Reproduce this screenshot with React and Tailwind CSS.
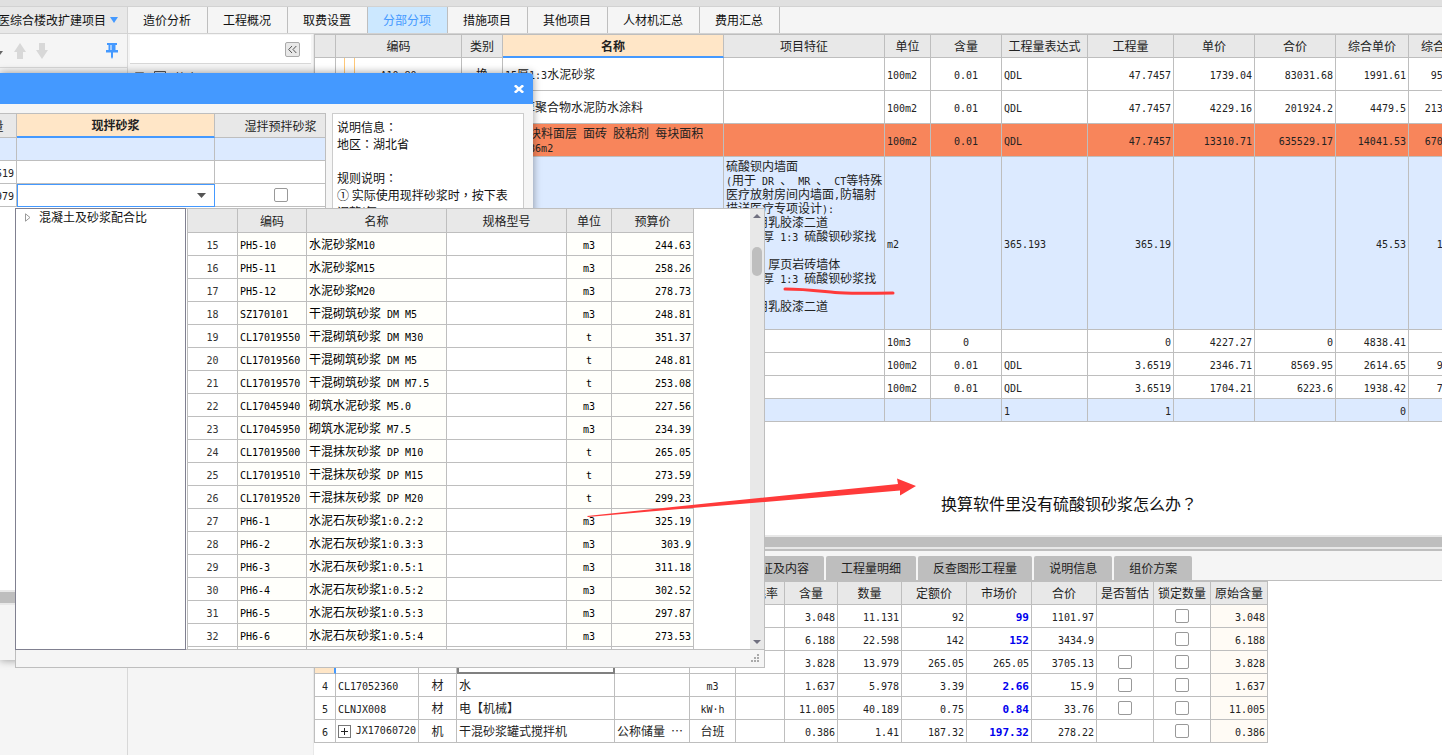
import React, { useState } from 'react'
import clsx from 'clsx'

const navTabs = ['造价分析', '工程概况', '取费设置', '分部分项', '措施项目', '其他项目', '人材机汇总', '费用汇总']

const detailTabs = ['安装费用', '换算信息', '标准换算', '单价构成', '工料机显示', '特征及内容', '工程量明细', '反查图形工程量', '说明信息', '组价方案']

const itemColumns = [
  { key: 'no', label: '', width: 'w-[21px]', align: 'text-center' },
  { key: 'code', label: '编码', width: 'w-[126px]', align: 'text-center' },
  { key: 'type', label: '类别', width: 'w-[41px]', align: 'text-center' },
  { key: 'name', label: '名称', width: 'w-[221px]', align: 'text-left', active: true },
  { key: 'feature', label: '项目特征', width: 'w-[161px]', align: 'text-left' },
  { key: 'unit', label: '单位', width: 'w-[46px]', align: 'text-left' },
  { key: 'content', label: '含量', width: 'w-[71px]', align: 'text-center' },
  { key: 'expr', label: '工程量表达式', width: 'w-[86px]', align: 'text-left' },
  { key: 'qty', label: '工程量', width: 'w-[86px]', align: 'text-right' },
  { key: 'price', label: '单价', width: 'w-[81px]', align: 'text-right' },
  { key: 'total', label: '合价', width: 'w-[81px]', align: 'text-right' },
  { key: 'fullPrice', label: '综合单价', width: 'w-[73px]', align: 'text-right' },
  { key: 'fullTotal', label: '综合合价', width: 'w-[73px]', align: 'text-right' },
]

const feature = [
  '硫酸钡内墙面',
  '(用于 DR 、 MR 、 CT等特殊',
  '医疗放射房间内墙面,防辐射',
  '描详医疗专项设计):',
  '1、医用乳胶漆二道',
  '2、20 厚 1:3 硫酸钡砂浆找',
  '平',
  '3、200 厚页岩砖墙体',
  '4、20 厚 1:3 硫酸钡砂浆找',
  '平',
  '5、医用乳胶漆二道',
  ' ',
].join('\n')

const items = [
  { height: 'h-[33px]', nested: true, code: 'A10-80', type: '换', name: '15厚1:3水泥砂浆', unit: '100m2', content: '0.01', expr: 'QDL', qty: '47.7457', price: '1739.04', total: '83031.68', fullPrice: '1991.61', fullTotal: '95090.81' },
  { height: 'h-[33px]', nested: true, name: '1.5厚聚合物水泥防水涂料', unit: '100m2', content: '0.01', expr: 'QDL', qty: '47.7457', price: '4229.16', total: '201924.2', fullPrice: '4479.5', fullTotal: '213876.86' },
  { height: 'h-[33px]', bg: 'bg-[#f8855b]', name: '墙面块料面层 面砖 胶粘剂 每块面积\n<=0.36m2', unit: '100m2', content: '0.01', expr: 'QDL', qty: '47.7457', price: '13310.71', total: '635529.17', fullPrice: '14041.53', fullTotal: '670422.68' },
  { height: 'h-[173px]', bg: 'bg-[#dceaff]', feature, unit: 'm2', expr: '365.193', qty: '365.19', fullPrice: '45.53', fullTotal: '16627.1' },
  { height: 'h-[23px]', unit: '10m3', content: '0', qty: '0', price: '4227.27', total: '0', fullPrice: '4838.41', fullTotal: '0' },
  { height: 'h-[23px]', unit: '100m2', content: '0.01', expr: 'QDL', qty: '3.6519', price: '2346.71', total: '8569.95', fullPrice: '2614.65', fullTotal: '9548.44' },
  { height: 'h-[23px]', unit: '100m2', content: '0.01', expr: 'QDL', qty: '3.6519', price: '1704.21', total: '6223.6', fullPrice: '1938.42', fullTotal: '7078.92' },
  { height: 'h-[23px]', bg: 'bg-[#dceaff]', expr: '1', qty: '1', fullPrice: '0', fullTotal: '0' },
]

const resourceColumns = [
  { key: 'no', label: '', width: 'w-[21px]', align: 'text-center' },
  { key: 'code', label: '编码', width: 'w-[83px]', align: 'text-left' },
  { key: 'type', label: '类别', width: 'w-[38px]', align: 'text-center' },
  { key: 'name', label: '名称', width: 'w-[158px]', align: 'text-left' },
  { key: 'spec', label: '规格及型号', width: 'w-[75px]', align: 'text-left' },
  { key: 'unit', label: '单位', width: 'w-[46px]', align: 'text-center' },
  { key: 'loss', label: '损耗率', width: 'w-[49px]', align: 'text-right' },
  { key: 'content', label: '含量', width: 'w-[53px]', align: 'text-right' },
  { key: 'qty', label: '数量', width: 'w-[64px]', align: 'text-right' },
  { key: 'quota', label: '定额价', width: 'w-[65px]', align: 'text-right' },
  { key: 'market', label: '市场价', width: 'w-[65px]', align: 'text-right' },
  { key: 'total', label: '合价', width: 'w-[65px]', align: 'text-right' },
  { key: 'estimated', label: '是否暂估', width: 'w-[57px]', align: 'text-center' },
  { key: 'locked', label: '锁定数量', width: 'w-[57px]', align: 'text-center' },
  { key: 'origin', label: '原始含量', width: 'w-[57px]', align: 'text-right' },
]

const resources = [
  { no: '1', type: '人', name: '普工', unit: '工日', content: '3.048', qty: '11.131', quota: '92', market: '99', changed: true, total: '1101.97' },
  { no: '2', type: '人', name: '技工', unit: '工日', content: '6.188', qty: '22.598', quota: '142', market: '152', changed: true, total: '3434.9' },
  { no: '3', code: 'CL17019500', type: '商浆', name: '干混抹灰砂浆 DP M10', unit: 't', content: '3.828', qty: '13.979', quota: '265.05', market: '265.05', total: '3705.13', canEstimate: true, selected: true },
  { no: '4', code: 'CL17052360', type: '材', name: '水', unit: 'm3', content: '1.637', qty: '5.978', quota: '3.39', market: '2.66', changed: true, total: '15.9', canEstimate: true },
  { no: '5', code: 'CLNJX008', type: '材', name: '电【机械】', unit: 'kW·h', content: '11.005', qty: '40.189', quota: '0.75', market: '0.84', changed: true, total: '33.76', canEstimate: true },
  { no: '6', code: 'JX17060720', expandable: true, type: '机', name: '干混砂浆罐式搅拌机', spec: '公称储量 …', unit: '台班', content: '0.386', qty: '1.41', quota: '187.32', market: '197.32', changed: true, total: '278.22' },
]

const mortars = [
  [15, 'PH5-10', '水泥砂浆M10', 'm3', '244.63'],
  [16, 'PH5-11', '水泥砂浆M15', 'm3', '258.26'],
  [17, 'PH5-12', '水泥砂浆M20', 'm3', '278.73'],
  [18, 'SZ170101', '干混砌筑砂浆 DM M5', 'm3', '248.81'],
  [19, 'CL17019550', '干混砌筑砂浆 DM M30', 't', '351.37'],
  [20, 'CL17019560', '干混砌筑砂浆 DM M5', 't', '248.81'],
  [21, 'CL17019570', '干混砌筑砂浆 DM M7.5', 't', '253.08'],
  [22, 'CL17045940', '砌筑水泥砂浆 M5.0', 'm3', '227.56'],
  [23, 'CL17045950', '砌筑水泥砂浆 M7.5', 'm3', '234.39'],
  [24, 'CL17019500', '干混抹灰砂浆 DP M10', 't', '265.05'],
  [25, 'CL17019510', '干混抹灰砂浆 DP M15', 't', '273.59'],
  [26, 'CL17019520', '干混抹灰砂浆 DP M20', 't', '299.23'],
  [27, 'PH6-1', '水泥石灰砂浆1:0.2:2', 'm3', '325.19'],
  [28, 'PH6-2', '水泥石灰砂浆1:0.3:3', 'm3', '303.9'],
  [29, 'PH6-3', '水泥石灰砂浆1:0.5:1', 'm3', '311.18'],
  [30, 'PH6-4', '水泥石灰砂浆1:0.5:2', 'm3', '302.52'],
  [31, 'PH6-5', '水泥石灰砂浆1:0.5:3', 'm3', '297.87'],
  [32, 'PH6-6', '水泥石灰砂浆1:0.5:4', 'm3', '273.53'],
]

const th = 'border-r border-b border-[#bebebe] bg-[#e8e8e8] p-0 text-center whitespace-nowrap'
const thActive = 'border-b-2 border-b-[#4499ff] bg-[#ffe6c7] font-bold'
const td = 'overflow-hidden border-r border-b border-[#bebebe] px-0.5 py-0 whitespace-pre'
const grid = 'w-0 table-fixed border-separate border-spacing-0 text-xs leading-[14px] text-[#222]'

// Latin runs are set in a monospace face exactly half a Chinese character wide
const Txt = ({ children, bold }) =>
  String(children ?? '')
    .split(/([\x20-\x7e·]+)/)
    .map((part, i) =>
      i % 2 ? (
        <span key={i} className={clsx("leading-none font-['DejaVu_Sans_Mono',monospace]", bold ? 'text-[11px]' : 'text-[10px]')}>
          {part}
        </span>
      ) : (
        part
      )
    )

// Full-width punctuation sits in the middle of its box
const Note = ({ children }) =>
  children.split(/([：，？])/).map((part, i) =>
    i % 2 ? (
      <span key={i} lang="zh-TW" className="leading-none font-['Noto_Sans_CJK_TC',sans-serif]">
        {part}
      </span>
    ) : (
      part
    )
  )

const Check = ({ label }) => (
  <input
    type="checkbox"
    aria-label={label}
    className="mx-auto block size-3.5 appearance-none rounded-[2px] border border-[#999] bg-white checked:bg-[#4499ff]"
  />
)

const TopBar = ({ active, onSelect }) => (
  <header className="shrink-0">
    <div className="h-1.5 bg-[#e0e0e0]" />
    <nav className="flex h-7 border-y border-[#d2d2d2] bg-[#f5f5f5] text-xs">
      <button type="button" className="flex w-32 shrink-0 items-center justify-end gap-1 overflow-hidden border-r border-[#d2d2d2] bg-[#e8e8e8] pr-[9px] whitespace-nowrap">
        医综合楼改扩建项目
        <svg width="8" height="6" viewBox="0 0 8 6" className="shrink-0">
          <path d="M0 0h8L4 6z" fill="#4499ff" />
        </svg>
      </button>
      {navTabs.map((tab) => (
        <button
          key={tab}
          type="button"
          onClick={() => onSelect(tab)}
          className={clsx(
            'shrink-0 border-r border-[#bebebe] pr-4 pl-[15px] whitespace-nowrap',
            tab === active && 'bg-[#cce8ff] text-[#4499ff]'
          )}
        >
          {tab}
        </button>
      ))}
    </nav>
  </header>
)

const ProjectPane = () => (
  <aside className="w-32 shrink-0 border-r border-[#d8d8d8] bg-[#f5f5f5]">
    <div className="flex h-[34px] items-center border-b border-[#d8d8d8] pr-[9px]">
      <svg width="3" height="4" viewBox="0 0 3 4" className="mt-1">
        <path d="M0 0h3L0 4z" fill="#666" />
      </svg>
      <svg width="12" height="16" viewBox="0 0 12 16" className="ml-[11px]">
        <path d="M6 0l6 9H9v7H3V9H0z" fill="#d8d8d8" />
      </svg>
      <svg width="12" height="16" viewBox="0 0 12 16" className="ml-2.5">
        <path d="M6 16l6-9H9V0H3v7H0z" fill="#d8d8d8" />
      </svg>
      <svg width="12" height="16" viewBox="0 0 12 16" className="ml-auto">
        <path d="M1 0h10v2H9.500v5H12v2.500H7V14l-1 2-1-2V9.500H0V7h2.500V2H1z" fill="#4499ff" />
        <path d="M4.500 2h1v5h-1z" fill="#fff" />
      </svg>
    </div>
  </aside>
)

const TreePane = () => (
  <aside className="w-[186px] shrink-0 border-r border-[#e8e8e8] bg-[#f5f5f5] px-0.5 pt-px">
    <div className="flex h-[29px] items-center justify-end border-b border-[#d8d8d8] bg-white pr-[11px]">
      <button type="button" aria-label="收起" className="flex size-[15px] items-center justify-center rounded-[2px] border border-[#aaa] bg-[#e8e8e8]">
        <svg width="9" height="7" viewBox="0 0 9 7" fill="none" stroke="#555">
          <path d="M4 0L.7 3.500 4 7M8.300 0L5 3.500 8.300 7" />
        </svg>
      </button>
    </div>
    <div className="flex h-7 items-center pl-[5px] text-xs text-[#222]">
      <svg width="9" height="12" viewBox="0 0 9 12" fill="none" stroke="#888">
        <path d="M.5 .5h8v10h-8zM2 6h5" />
      </svg>
      <svg width="12" height="14" viewBox="0 0 12 14" fill="#cfe3ff" stroke="#555" className="mr-2 ml-2.5">
        <path d="M.5 .5h11v13H.5zM3 4h6M3 7h6" />
      </svg>
      整个项目
    </div>
  </aside>
)

const ItemTable = () => (
  <table className={clsx(grid, 'border-t border-l border-[#bebebe]')}>
    <thead>
      <tr className="h-[23px]">
        {itemColumns.map((col) => (
          <th key={col.key} className={clsx(th, col.width, col.active ? thActive : 'font-normal')}>
            {col.label}
          </th>
        ))}
      </tr>
    </thead>
    <tbody>
      {items.map((row, i) => (
        <tr key={i} className={clsx(row.height, row.bg)}>
          {itemColumns.map((col) => (
            <td key={col.key} className={clsx(td, col.align, 'relative')}>
              {row.nested && col.key === 'code' && (
                // tree guides of the parent levels
                <span className="absolute inset-y-0 left-2 w-[11px] border-x border-[#ffc878]" />
              )}
              <Txt>{row[col.key]}</Txt>
            </td>
          ))}
        </tr>
      ))}
    </tbody>
  </table>
)

const ResourceCell = ({ row, col }) => {
  if (col.key === 'locked') return <Check label={`锁定数量 ${row.no}`} />
  if (col.key === 'estimated') return row.canEstimate ? <Check label={`是否暂估 ${row.no}`} /> : null
  if (col.key === 'origin') return <Txt>{row.content}</Txt>
  if (col.key === 'code' && row.expandable) {
    return (
      <span className="flex items-center gap-[5px]">
        <button type="button" aria-label="展开" className="flex size-[13px] items-center justify-center border border-[#777] bg-white">
          <svg width="7" height="7" viewBox="0 0 7 7" stroke="#222">
            <path d="M0 3.500h7M3.500 0v7" />
          </svg>
        </button>
        <Txt>{row.code}</Txt>
      </span>
    )
  }
  return <Txt bold={col.key === 'market' && row.changed}>{row[col.key]}</Txt>
}

const ResourceTable = () => (
  <table className={clsx(grid, 'border-t border-l border-[#bebebe]')}>
    <thead>
      <tr className="h-[23px]">
        {resourceColumns.map((col) => (
          <th key={col.key} className={clsx(th, col.width, 'font-normal')}>
            {col.label}
          </th>
        ))}
      </tr>
    </thead>
    <tbody>
      {resources.map((row) => (
        <tr key={row.no} className="h-[23px]">
          {resourceColumns.map((col) => (
            <td
              key={col.key}
              className={clsx(
                td,
                col.align,
                col.key === 'origin' && 'bg-[#fffbf5]',
                col.key === 'market' && row.changed && 'font-bold text-[#0000ee]',
                row.selected && col.key === 'no' && 'border-r-2 border-r-[#4499ff] bg-[#ffe6c7]',
                row.selected && col.key === 'name' && 'outline-2 -outline-offset-2 outline-[#808080]'
              )}
            >
              <ResourceCell row={row} col={col} />
            </td>
          ))}
        </tr>
      ))}
    </tbody>
  </table>
)

const DetailPane = () => (
  <section className="flex h-[220px] shrink-0 flex-col">
    <div className="h-4 shrink-0 border-y-2 border-t-[#e8e8e8] border-b-[#bebebe] bg-[#bebebe]">
      <div className="h-full border-b-2 border-[#e8e8e8]" />
    </div>
    <div className="flex shrink-0 gap-0.5 border-b border-[#bebebe] bg-[#f5f5f5] pt-[5px] pl-2 text-xs text-[#222]">
      {detailTabs.map((tab) => (
        <button key={tab} type="button" className="h-6 shrink-0 rounded-t-[2px] bg-[#bebebe] px-[15px] whitespace-nowrap">
          {tab}
        </button>
      ))}
    </div>
    <ResourceTable />
  </section>
)

const GlueDialog = () => (
  <section role="dialog" aria-label="标准换算" className="absolute top-[73px] left-0 flex h-[587px] w-[533px] flex-col overflow-hidden rounded-tr-[4px] bg-[#f5f5f5] shadow-[0_0_8px_rgba(0,0,0,0.4)]">
    <div className="flex h-[31px] shrink-0 items-center justify-end bg-[#4499ff] pr-[9px]">
      <button type="button" aria-label="关闭">
        <svg width="10" height="8" viewBox="0 0 10 8" stroke="#fff" strokeWidth="2.500">
          <path d="M.8 .3l8.400 7.400M9.200 .3L.8 7.700" />
        </svg>
      </button>
    </div>
    <div className="flex pt-[9px]">
      <div className="flex h-[492px] w-[326px] shrink-0 flex-col overflow-hidden border-t border-r border-[#bebebe] bg-white">
        <table className={clsx(grid, '-ml-[45px] shrink-0')}>
          <thead>
            <tr className="h-6">
              <th className={clsx(th, 'w-[62px] font-normal')}>工程量</th>
              <th className={clsx(th, thActive, 'w-[198px]')}>现拌砂浆</th>
              <th className={clsx(th, 'w-[132px] font-normal')}>湿拌预拌砂浆</th>
            </tr>
          </thead>
          <tbody>
            <tr className="h-[23px] bg-[#dceaff]">
              <td className={td} />
              <td className={td} />
              <td className={td} />
            </tr>
            <tr className="h-[23px]">
              <td className={clsx(td, 'text-right')}><Txt>3.6519</Txt></td>
              <td className={td} />
              <td className={td} />
            </tr>
            <tr className="h-[23px]">
              <td className={clsx(td, 'text-right')}><Txt>13.979</Txt></td>
              <td className="relative border border-[#4499ff] p-0">
                <select aria-label="现拌砂浆" className="block h-5 w-full appearance-none bg-transparent">
                  <option />
                </select>
                <svg width="9" height="5" viewBox="0 0 9 5" className="pointer-events-none absolute top-2 right-2">
                  <path d="M0 0h9L4.500 5z" fill="#555" />
                </svg>
              </td>
              <td className={td}><Check label="湿拌预拌砂浆" /></td>
            </tr>
          </tbody>
        </table>
        <div className="mt-auto h-[15px] border-y-2 border-[#e8e8e8] bg-[#bebebe]" />
      </div>
      <div className="ml-1.5 h-[492px] w-48 border border-[#ccc] bg-white px-1 py-1 text-xs leading-[17px] whitespace-pre">
        <Note>{'说明信息：\n地区：湖北省\n\n规则说明：\n① 实际使用现拌砂浆时，按下表\n调整(每：'}</Note>
      </div>
    </div>
  </section>
)

const MortarPicker = () => (
  <section className="absolute top-[208px] left-[15px] flex h-[460px] w-[750px] flex-col border border-[#bebebe] bg-[#f5f5f5]">
    <div className="flex h-[441px] border-b border-[#bebebe] bg-white">
      <div className="-m-px mr-0 flex w-[171px] shrink-0 items-start border border-[#808090] pl-[9px] text-xs">
        <button type="button" className="flex items-center gap-2">
          <svg width="6" height="9" viewBox="0 0 6 9" fill="none" stroke="#999">
            <path d="M.5 .8v7.400L5 4.500z" />
          </svg>
          混凝土及砂浆配合比
        </button>
      </div>
      <div className="ml-px flex min-w-0 flex-1 overflow-hidden">
        <table className={clsx(grid, 'h-max border-l border-[#bebebe] text-black')}>
          <thead>
            <tr className="h-6 text-[#222]">
              <th className={clsx(th, 'w-[50px] font-normal')} />
              <th className={clsx(th, 'w-[69px] font-normal')}>编码</th>
              <th className={clsx(th, 'w-[140px] font-normal')}>名称</th>
              <th className={clsx(th, 'w-[120px] font-normal')}>规格型号</th>
              <th className={clsx(th, 'w-[45px] font-normal')}>单位</th>
              <th className={clsx(th, 'w-[82px] font-normal')}>预算价</th>
            </tr>
          </thead>
          <tbody>
            {mortars.map(([no, code, name, unit, price]) => (
              <tr key={no} className="h-[23px]">
                <td className={clsx(td, 'text-center text-[#333]')}><Txt>{no}</Txt></td>
                <td className={clsx(td, 'bg-[#fffffb]')}><Txt>{code}</Txt></td>
                <td className={clsx(td, 'bg-[#fffffb]')}><Txt>{name}</Txt></td>
                <td className={td} />
                <td className={clsx(td, 'bg-[#fffffb] text-center')}><Txt>{unit}</Txt></td>
                <td className={clsx(td, 'bg-[#fffffb] text-right')}><Txt>{price}</Txt></td>
              </tr>
            ))}
            <tr className="h-[23px]">
              {[0, 1, 2, 3, 4, 5].map((i) => (
                <td key={i} className={td} />
              ))}
            </tr>
          </tbody>
        </table>
        <div className="ml-auto flex w-3.5 flex-col items-center bg-[#e8e8e8] py-[5px]">
          <svg width="8" height="4" viewBox="0 0 8 4">
            <path d="M4 0l4 4H0z" fill="#707080" />
          </svg>
          <div className="mt-[29px] h-[29px] w-2.5 rounded-full bg-[#bebebe]" />
          <svg width="8" height="4" viewBox="0 0 8 4" className="mt-auto">
            <path d="M0 0h8L4 4z" fill="#707080" />
          </svg>
        </div>
      </div>
    </div>
    <svg width="9" height="9" viewBox="0 0 9 9" fill="#aaa" className="mt-1 mr-1 ml-auto">
      <path d="M6 0h2v2H6zM3 3h2v2H3zM6 3h2v2H6zM0 6h2v2H0zM3 6h2v2H3zM6 6h2v2H6z" />
    </svg>
  </section>
)

const Annotations = () => (
  <div className="pointer-events-none absolute top-0 left-0">
    <svg width="940" height="530" viewBox="0 0 940 530" className="block">
      <path d="M785 289c20 0 34 2 50 3.500c14 1.500 40 .5 58 .5" fill="none" stroke="#ff3a3a" strokeWidth="3" strokeLinecap="round" />
      <path d="M587 516L720 502L898 484L897 478.500L916 486L900 495.500L900 490.500L740 504L650 511.500L588 517z" fill="#ff3a3a" />
    </svg>
    <p className="absolute top-[491px] left-[941px] text-base whitespace-nowrap text-[#111]">
      <Note>换算软件里没有硫酸钡砂浆怎么办？</Note>
    </p>
  </div>
)

const App = () => {
  const [active, setActive] = useState('分部分项')

  return (
    <div className="relative flex h-screen flex-col overflow-hidden bg-white font-['Noto_Sans_CJK_SC',sans-serif] text-[#111]">
      <TopBar active={active} onSelect={setActive} />
      <div className="flex min-h-0 flex-1">
        <ProjectPane />
        <TreePane />
        <main className="flex min-w-0 flex-1 flex-col overflow-hidden">
          <div className="min-h-0 flex-1 overflow-hidden">
            <ItemTable />
          </div>
          <DetailPane />
        </main>
      </div>
      <GlueDialog />
      <MortarPicker />
      <Annotations />
    </div>
  )
}

export default App
